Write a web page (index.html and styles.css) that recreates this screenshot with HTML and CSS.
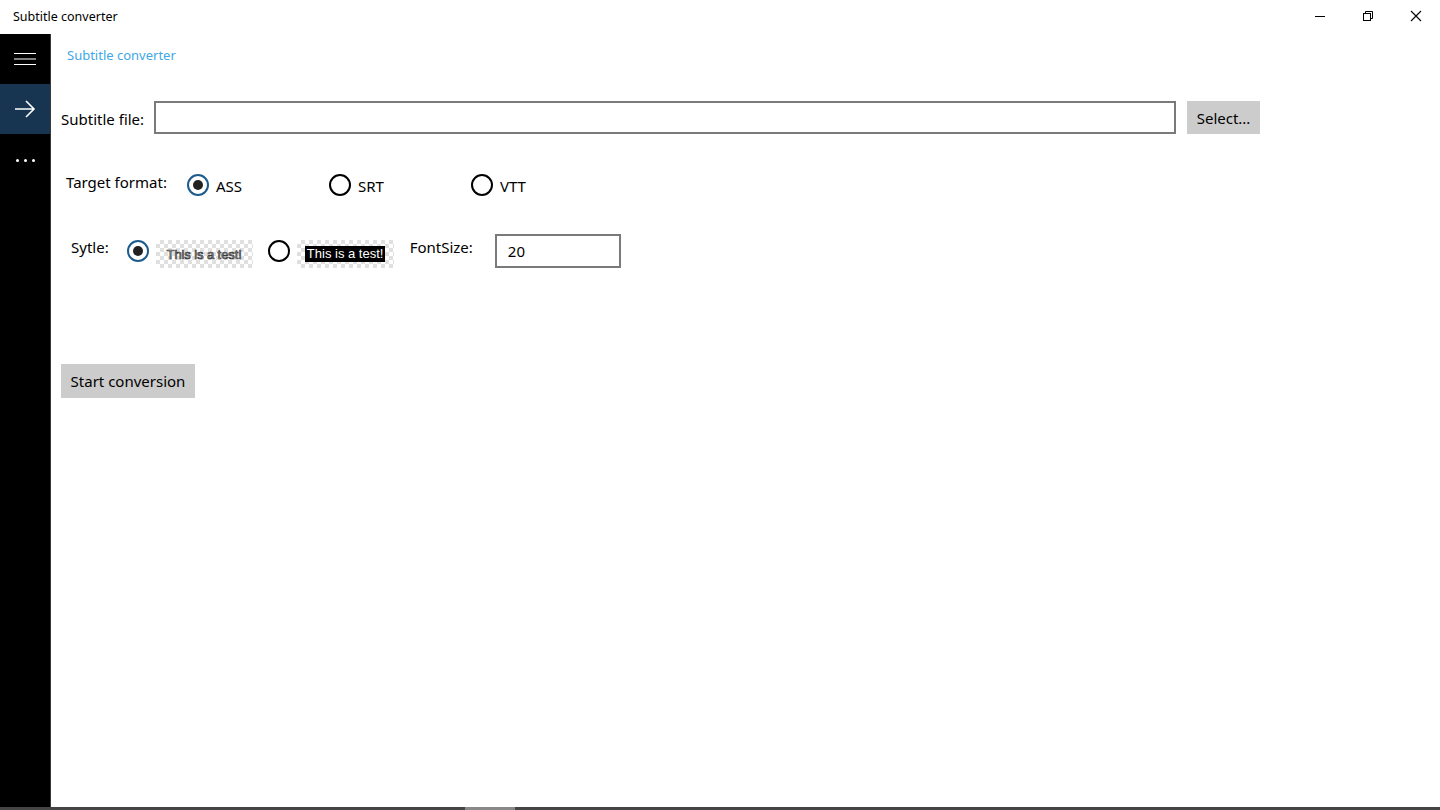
FILE: index.html
```html
<!DOCTYPE html>
<html>
<head>
<meta charset="utf-8">
<link rel="stylesheet" href="styles.css">
</head>
<body>
<div class="window">
  <div class="titlebar">
    <div class="title">Subtitle converter</div>
    <div class="controls">
      <div class="ctl"><svg width="12" height="12" viewBox="0 0 12 12"><line x1="1" y1="6.5" x2="11" y2="6.5" stroke="#000" stroke-width="1"/></svg></div>
      <div class="ctl"><svg width="12" height="12" viewBox="0 0 12 12"><rect x="1.5" y="3.5" width="7" height="7" fill="none" stroke="#000" stroke-width="1"/><path d="M3.5 3.5V1.5H10.5V8.5H8.5" fill="none" stroke="#000" stroke-width="1"/></svg></div>
      <div class="ctl"><svg width="12" height="12" viewBox="0 0 12 12"><path d="M1 1L11 11M11 1L1 11" stroke="#000" stroke-width="1.1"/></svg></div>
    </div>
  </div>
  <div class="body">
    <nav class="sidebar">
      <div class="navitem"><svg width="22" height="14" viewBox="0 0 22 14"><path d="M0 1.5H22M0 7H22M0 12.5H22" stroke="#fff" stroke-width="1.2"/></svg></div>
      <div class="navitem active"><svg width="22" height="20" viewBox="0 0 22 20"><path d="M1 10H20M12 2L20 10L12 18" fill="none" stroke="#fff" stroke-width="1.6"/></svg></div>
      <div class="navitem dots"><span></span><span></span><span></span></div>
    </nav>
    <main class="content">
      <div class="header">Subtitle converter</div>
      <div class="row filerow">
        <label class="lbl">Subtitle file:</label>
        <div class="textbox wide"></div>
        <button class="btn">Select...</button>
      </div>
      <div class="row formatrow">
        <label class="lbl">Target format:</label>
        <div class="radio checked"><span class="circle"></span><span>ASS</span></div>
        <div class="radio"><span class="circle"></span><span>SRT</span></div>
        <div class="radio"><span class="circle"></span><span>VTT</span></div>
      </div>
      <div class="row stylerow">
        <label class="lbl first">Sytle:</label>
        <div class="radio checked"><span class="circle"></span></div>
        <div class="swatch"><span class="outline">This is a test!</span></div>
        <div class="radio"><span class="circle"></span></div>
        <div class="swatch last"><span class="boxed">This is a test!</span></div>
        <label class="lbl fs">FontSize:</label>
        <div class="textbox small">20</div>
      </div>
      <button class="btn start">Start conversion</button>
    </main>
  </div>
  <div class="bottombar"><span class="thumb"></span></div>
</div>
</body>
</html>
```
FILE: styles.css
```css
* { box-sizing: border-box; }
html, body { margin: 0; padding: 0; }
body {
  width: 1440px; height: 810px; overflow: hidden;
  font-family: "Noto Sans", "Open Sans", sans-serif;
  background: #fff; color: #000;
}
.window { display: flex; flex-direction: column; height: 810px; }
.titlebar {
  height: 34px; display: flex; align-items: center; justify-content: space-between;
  flex: 0 0 34px;
}
.title { font-size: 12.5px; padding-left: 13px; padding-bottom: 2px; }
.controls { display: flex; }
.ctl { width: 48px; height: 34px; display: flex; align-items: center; justify-content: center; padding-bottom: 2px; }
.body { flex: 1; display: flex; min-height: 0; }
.sidebar {
  width: 51px; background: #000; border-right: 1px solid #3a3a3a;
  display: flex; flex-direction: column;
}
.navitem { height: 50px; display: flex; align-items: center; justify-content: center; }
.navitem.active { background: #173450; }
.navitem.dots { gap: 5px; height: 52px; }
.dots span { width: 3px; height: 3px; background: #fff; border-radius: 50%; }
.content { flex: 1; padding-left: 10px; }
.header { color: #41a8e6; font-size: 13px; padding: 12px 0 0 6px; height: 67px; }
.row { display: flex; align-items: center; }
.lbl { font-size: 15px; }
.filerow { height: 33px; }
.filerow .lbl { margin-right: 10px; padding-top: 2px; }
.textbox {
  border: 2px solid #7a7a7a; height: 33px; font-size: 15px;
  display: flex; align-items: center; padding-left: 11px;
}
.wide { width: 1022px; }
.btn {
  background: #cccccc; border: none; font-family: inherit; font-size: 15px;
  height: 33px; padding: 0 10px; color: #000;
}
.filerow .btn { margin-left: 11px; width: 73px; padding: 0; }
.formatrow { margin-top: 36px; height: 30px; padding-left: 5px; }
.formatrow .lbl { margin-right: 20px; margin-top: -6px; }
.radio { display: flex; align-items: center; font-size: 15px; }
.radio .circle {
  width: 22px; height: 22px; border: 2px solid #000; border-radius: 50%;
  display: flex; align-items: center; justify-content: center;
}
.radio.checked .circle { border-color: #1d5b8c; }
.radio.checked .circle::after {
  content: ""; width: 10px; height: 10px; border-radius: 50%; background: #222;
}
.formatrow .radio { width: 142px; }
.formatrow .radio span:last-child { margin-left: 7px; padding-top: 1px; }
.stylerow { margin-top: 34px; height: 34px; padding-left: 10px; }
.stylerow .lbl { margin-top: -8px; }
.stylerow .first { margin-right: 18px; }
.stylerow .radio { margin-right: 7px; }
.swatch {
  width: 97px; height: 28px; display: flex; align-items: center; justify-content: center;
  background-color: #fff;
  background-image:
    linear-gradient(45deg, #e0e0e0 25%, transparent 25%, transparent 75%, #e0e0e0 75%),
    linear-gradient(45deg, #e0e0e0 25%, transparent 25%, transparent 75%, #e0e0e0 75%);
  background-size: 8px 8px;
  background-position: 0 0, 4px 4px;
  margin-top: 5px; margin-right: 15px;
  font-family: "Liberation Sans", Arial, sans-serif; font-size: 13px;
}
.swatch.last { margin-right: 16px; }
.outline { color: #b8b8b8; -webkit-text-stroke: 0.7px #3a3a3a; letter-spacing: -0.1px; padding-top: 1px; }
.boxed { background: #000; color: #fff; padding: 0 2px; line-height: 16px; font-size: 13px; margin-top: 1px; }
.fs { margin-right: 22px; }
.small { width: 126px; height: 34px; }
.start { margin-top: 96px; width: 134px; height: 34px; padding: 0; }
.bottombar { height: 3px; background: #444; flex: 0 0 3px; position: relative; }
.thumb { position: absolute; left: 465px; width: 50px; top: 0; height: 3px; background: #888; }
```
